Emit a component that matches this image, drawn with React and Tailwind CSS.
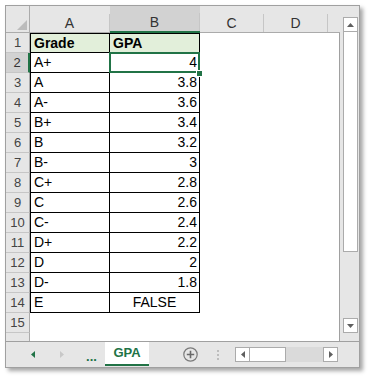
const rows = [
  ["Grade", "GPA"],
  ["A+", "4"],
  ["A", "3.8"],
  ["A-", "3.6"],
  ["B+", "3.4"],
  ["B", "3.2"],
  ["B-", "3"],
  ["C+", "2.8"],
  ["C", "2.6"],
  ["C-", "2.4"],
  ["D+", "2.2"],
  ["D", "2"],
  ["D-", "1.8"],
  ["E", "FALSE"],
];

function ColHead({ label, w, selected }) {
  return (
    <div
      className={`${w} shrink-0 h-full flex flex-col justify-end ${
        selected ? "bg-[#d2d2d2] border-b-2 border-[#217346]" : "border-b border-[#ababab]"
      }`}
    >
      <div className="h-[18px] border-r border-[#c6c6c6] flex items-center justify-center text-[14px] text-[#333]">
        {label}
      </div>
    </div>
  );
}

function RowHead({ n, selected }) {
  return (
    <div
      className={`w-[24px] shrink-0 h-full flex items-center justify-center text-[13px] border-b border-[#c6c6c6] ${
        selected
          ? "bg-[#d2d2d2] border-r-2 border-r-[#217346] text-[#333]"
          : "bg-[#e6e6e6] border-r border-r-[#ababab] text-[#444]"
      }`}
    >
      {n}
    </div>
  );
}

function DataRow({ i, grade, gpa }) {
  const first = i === 0;
  const selected = i === 1;
  return (
    <div className="flex h-[20px] shrink-0">
      <RowHead n={i + 1} selected={selected} />
      <div
        className={`w-[80px] shrink-0 border-l border-r border-b border-black pl-[3px] flex items-center text-[14px] text-black ${
          first ? "border-t bg-[#e2efda] font-bold" : ""
        }`}
      >
        {grade}
      </div>
      <div
        className={`relative w-[90px] shrink-0 border-r border-b border-black flex items-center text-[14px] text-black ${
          first
            ? "border-t bg-[#e2efda] font-bold pl-[3px]"
            : gpa === "FALSE"
            ? "justify-center"
            : "justify-end pr-[2px]"
        }`}
      >
        {gpa}
        {selected && (
          <>
            <div className="absolute -top-[1px] -left-[1px] -right-[1px] -bottom-[1px] border-2 border-[#217346]" />
            <div className="absolute -right-[4px] -bottom-[5px] w-[7px] h-[7px] bg-[#217346] border border-white z-10" />
          </>
        )}
      </div>
      <div className="flex-1" />
    </div>
  );
}

function Tri({ dir, color, w = 7, h = 4 }) {
  const pts = {
    up: `0,${h} ${w / 2},0 ${w},${h}`,
    down: `0,0 ${w},0 ${w / 2},${h}`,
    left: `${w},0 ${w},${h} 0,${h / 2}`,
    right: `0,0 0,${h} ${w},${h / 2}`,
  }[dir];
  return (
    <svg width={w} height={h} viewBox={`0 0 ${w} ${h}`}>
      <polygon points={pts} fill={color} />
    </svg>
  );
}

export default function App() {
  return (
    <div className="w-[368px] h-[378px] bg-white pl-[5px] pt-[5px] font-['Liberation_Sans',Arial,sans-serif]">
      <div className="w-[355px] h-[363px] border border-[#a0a0a0] bg-[#e6e6e6] shadow-[3px_3px_4px_rgba(0,0,0,0.35)] flex flex-col">
        <div className="flex h-[335px] shrink-0">
          <div className="w-[334px] shrink-0 flex flex-col">
            {/* column headers */}
            <div className="flex h-[27px] shrink-0">
              <div className="relative w-[24px] shrink-0 h-full border-r border-b border-[#ababab] flex items-end justify-end pr-[2px] pb-[2px]">
                <svg width="10" height="10" viewBox="0 0 10 10">
                  <polygon points="10,0 10,10 0,10" fill="#bcbcbc" />
                </svg>
              </div>
              <ColHead label="A" w="w-[80px]" />
              <ColHead label="B" w="w-[90px]" selected />
              <ColHead label="C" w="w-[64px]" />
              <ColHead label="D" w="w-[64px]" />
              <div className="flex-1 h-full border-b border-[#ababab]" />
            </div>
            {/* body */}
            <div className="flex-1 bg-white border-r border-[#a0a0a0] flex flex-col overflow-hidden">
              {rows.map((r, i) => (
                <DataRow key={i} i={i} grade={r[0]} gpa={r[1]} />
              ))}
              <div className="flex h-[20px] shrink-0">
                <RowHead n={15} />
                <div className="flex-1" />
              </div>
              <div className="flex h-[8px] shrink-0">
                <div className="w-[24px] h-full bg-[#e6e6e6] border-r border-[#ababab]" />
              </div>
            </div>
          </div>
          {/* vertical scrollbar */}
          <div className="w-[19px] shrink-0 flex flex-col pl-[3px] pt-[11px] pb-[8px]">
            <div className="w-[15px] h-[15px] shrink-0 bg-white border border-[#ababab] flex items-center justify-center">
              <Tri dir="up" color="#5f5f5f" />
            </div>
            <div className="w-[15px] h-[220px] shrink-0 bg-white border border-t-0 border-[#ababab]" />
            <div className="flex-1" />
            <div className="w-[15px] h-[15px] shrink-0 bg-white border border-[#ababab] flex items-center justify-center">
              <Tri dir="down" color="#5f5f5f" />
            </div>
          </div>
        </div>

        {/* sheet tabs */}
        <div className="h-[26px] shrink-0 border-t border-[#a0a0a0] flex items-center pl-[14px]">
          <div className="w-[26px] flex justify-center">
            <Tri dir="left" color="#217346" w={4} h={7} />
          </div>
          <div className="w-[32px] flex justify-center">
            <Tri dir="right" color="#c8c8c8" w={4} h={7} />
          </div>
          <div className="w-[27px] flex justify-center text-[13px] font-bold text-[#217346] leading-none pt-[4px]">
            ...
          </div>
          <div className="w-[44px] self-stretch mb-[1px] bg-white border-b-2 border-[#217346] flex items-center justify-center text-[13px] font-bold text-[#217346]">
            GPA
          </div>
          <svg className="ml-[34px] shrink-0" width="15" height="15" viewBox="0 0 15 15">
            <circle cx="7.5" cy="7.5" r="6.7" fill="none" stroke="#7a7a7a" strokeWidth="1.2" />
            <path d="M7.5 3.8v7.4M3.8 7.5h7.4" stroke="#6a6a6a" strokeWidth="1.6" />
          </svg>
          <div className="ml-[19px] w-[2px] flex flex-col gap-[2px]">
            <div className="w-[2px] h-[2px] bg-[#bdbdbd]" />
            <div className="w-[2px] h-[2px] bg-[#bdbdbd]" />
            <div className="w-[2px] h-[2px] bg-[#bdbdbd]" />
          </div>
          <div className="ml-[16px] w-[103px] h-[15px] flex">
            <div className="w-[15px] h-full bg-white border border-[#ababab] flex items-center justify-center">
              <Tri dir="left" color="#5f5f5f" w={4} h={7} />
            </div>
            <div className="w-[36px] h-full bg-white border border-l-0 border-[#ababab]" />
            <div className="flex-1 h-full bg-[#dadada]" />
            <div className="w-[15px] h-full bg-white border border-[#ababab] flex items-center justify-center">
              <Tri dir="right" color="#5f5f5f" w={4} h={7} />
            </div>
          </div>
        </div>
      </div>
    </div>
  );
}
